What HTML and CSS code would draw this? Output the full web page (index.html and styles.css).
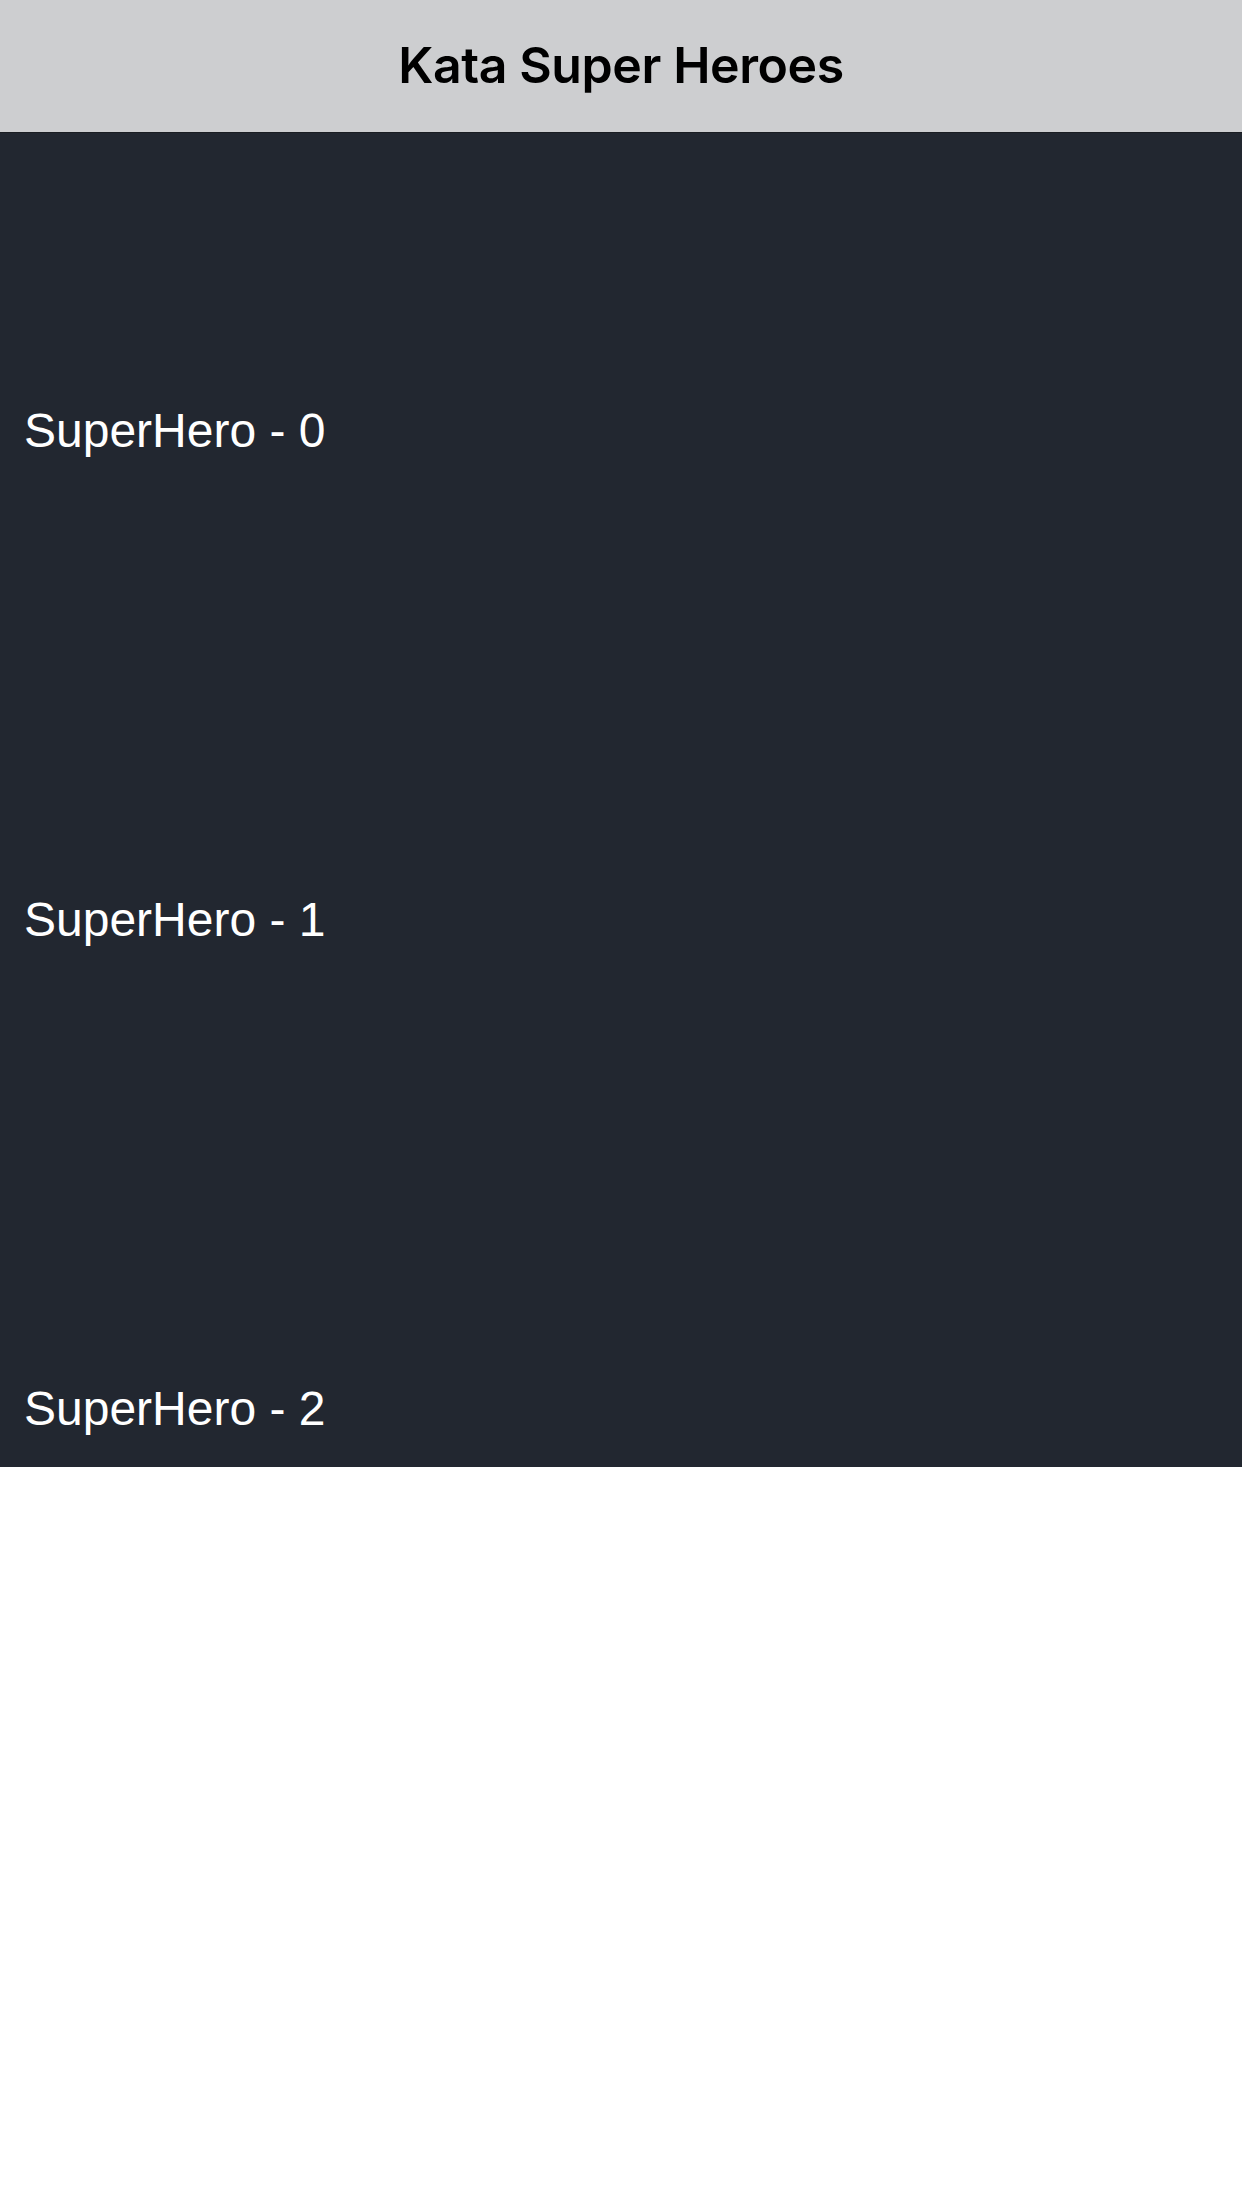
FILE: index.html
```html
<!DOCTYPE html>
<html lang="en">
<head>
<meta charset="utf-8">
<title>Kata Super Heroes</title>
<link rel="stylesheet" href="styles.css">
</head>
<body>
<header class="nav-bar">
  <h1 class="nav-title">Kata Super Heroes</h1>
</header>
<main class="hero-list">
  <div class="hero-row hero-row-first"><span class="hero-name">SuperHero - 0</span></div>
  <div class="hero-row"><span class="hero-name">SuperHero - 1</span></div>
  <div class="hero-row"><span class="hero-name">SuperHero - 2</span></div>
</main>
</body>
</html>
```
FILE: styles.css
```css
html, body {
  margin: 0;
  padding: 0;
  background: #ffffff;
}

body {
  width: 1242px;
  height: 2208px;
  overflow: hidden;
}

.nav-bar {
  box-sizing: border-box;
  height: 133px;
  padding-top: 35px;
  background: #cdced0;
  border-bottom: 1px solid #1a1d22;
  display: flex;
  justify-content: center;
  align-items: flex-start;
}

.nav-title {
  margin: 0;
  font-family: Inter, "Liberation Sans", sans-serif;
  font-weight: 600;
  font-size: 50px;
  line-height: 60px;
  letter-spacing: -0.4px;
  color: #000000;
}

.hero-list {
  display: flex;
  flex-direction: column;
  background: #222730;
}

.hero-row {
  box-sizing: border-box;
  height: 489px;
  display: flex;
  align-items: flex-end;
  padding: 0 24px 30px;
}

.hero-row-first {
  height: 356px;
}

.hero-name {
  font-family: "Liberation Sans", Arial, sans-serif;
  font-size: 48px;
  line-height: 56px;
  color: #ffffff;
}
```
